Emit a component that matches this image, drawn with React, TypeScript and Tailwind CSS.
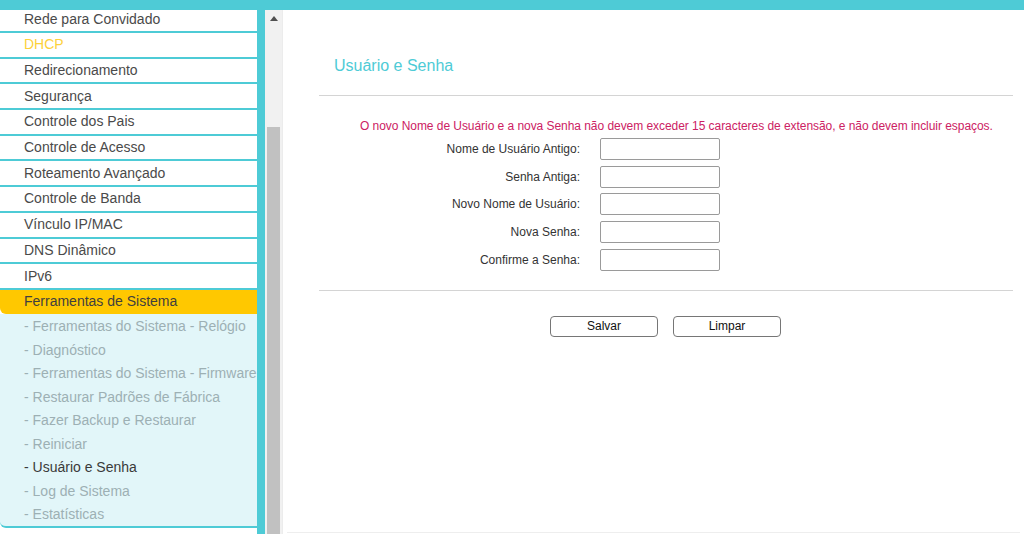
import React from 'react';

const teal = 'bg-[#4ecbd6]';

const topItems = [
  'Rede para Convidado',
  'DHCP',
  'Redirecionamento',
  'Segurança',
  'Controle dos Pais',
  'Controle de Acesso',
  'Roteamento Avançado',
  'Controle de Banda',
  'Vínculo IP/MAC',
  'DNS Dinâmico',
  'IPv6',
];

const subItems = [
  'Ferramentas do Sistema - Relógio',
  'Diagnóstico',
  'Ferramentas do Sistema - Firmware',
  'Restaurar Padrões de Fábrica',
  'Fazer Backup e Restaurar',
  'Reiniciar',
  'Usuário e Senha',
  'Log de Sistema',
  'Estatísticas',
];

const fields = [
  'Nome de Usuário Antigo:',
  'Senha Antiga:',
  'Novo Nome de Usuário:',
  'Nova Senha:',
  'Confirme a Senha:',
];

const Sidebar: React.FC = () => (
  <aside className="w-[257px] overflow-hidden">
    <div className="-mt-[2.7px]">
      {topItems.map((item) => (
        <div
          key={item}
          className={`h-[25.7px] border-b-2 border-[#4ecbd6] bg-white pl-6 flex items-center text-[14px] whitespace-nowrap ${
            item === 'DHCP' ? 'text-[#fdd13a]' : 'text-[#4a4a4a]'
          }`}
        >
          {item}
        </div>
      ))}
      <div className="h-[24px] bg-[#ffc800] rounded-bl-[6px] pl-6 flex items-center text-[14px] text-[#3f3f3f] whitespace-nowrap">
        Ferramentas de Sistema
      </div>
      <div className="bg-[#e2f6f9] border-b-2 border-[#4ecbd6] rounded-bl-[6px] pt-[1px]">
        {subItems.map((item) => (
          <div
            key={item}
            className={`h-[23.5px] pl-6 flex items-center text-[14px] whitespace-nowrap ${
              item === 'Usuário e Senha' ? 'text-[#3a3a3a]' : 'text-[#9db0b4]'
            }`}
          >
            - {item}
          </div>
        ))}
      </div>
    </div>
  </aside>
);

const Scrollbar: React.FC = () => (
  <div className="w-[17px] bg-[#f1f1f1] flex flex-col">
    <div className="h-[17px] flex items-center justify-center">
      <svg width="8" height="5" viewBox="0 0 8 5">
        <path d="M4 0 L8 5 L0 5 Z" fill="#505050" />
      </svg>
    </div>
    <div className="h-[100px]" />
    <div className="flex-1 mx-[2px] bg-[#c1c1c1]" />
  </div>
);

export default function App() {
  return (
    <div className="w-[1024px] h-[534px] flex flex-col overflow-hidden bg-white font-['Liberation_Sans',Arial,sans-serif]">
      <div className={`h-[10px] ${teal}`} />
      <div className="flex flex-1 min-h-0">
        <Sidebar />
        <div className={`w-[8px] ${teal}`} />
        <Scrollbar />
        <main className="flex-1 flex flex-col border-l border-[#ececec]">
          <div className="flex-1 ml-[36px] mr-[11px]">
            <h1 className="mt-[47px] ml-[15px] text-[16px] leading-[18px] text-[#4ecbd6]">Usuário e Senha</h1>
            <div className="mt-[20px] h-px bg-[#d4d4d4]" />
            <p className="mt-[23px] pl-[41px] text-[12px] leading-[14px] tracking-[-0.05px] text-[#cc2163] whitespace-nowrap">
              O novo Nome de Usuário e a nova Senha não devem exceder 15 caracteres de extensão, e não devem incluir espaços.
            </p>
            <div className="mt-[5px] flex flex-col gap-[5.7px]">
              {fields.map((label) => (
                <div key={label} className="flex items-center gap-[20px]">
                  <label className="w-[261px] text-right text-[12px] text-[#333]">{label}</label>
                  <input
                    type="text"
                    className="w-[120px] h-[22px] border border-[#9a9a9a] rounded-[2px] bg-white outline-none"
                  />
                </div>
              ))}
            </div>
            <div className="mt-[19px] h-px bg-[#d4d4d4]" />
            <div className="mt-[25px] pl-[231px] flex gap-[15px]">
              <button className="w-[108px] h-[21px] border border-[#767676] rounded-[4px] bg-white text-[12px] text-[#111]">
                Salvar
              </button>
              <button className="w-[108px] h-[21px] border border-[#767676] rounded-[4px] bg-white text-[12px] text-[#111]">
                Limpar
              </button>
            </div>
          </div>
          <div className="ml-[4px] mr-[4px] mb-[1px] h-px bg-[#eeeeee]" />
        </main>
      </div>
    </div>
  );
}
